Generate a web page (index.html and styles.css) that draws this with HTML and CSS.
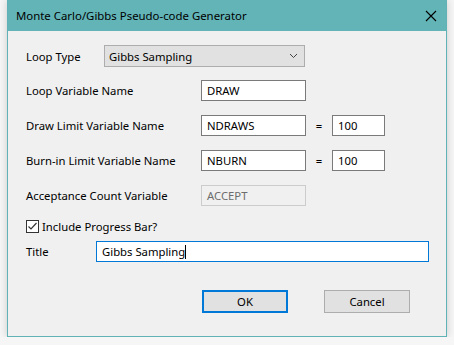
FILE: index.html
```html
<!DOCTYPE html>
<html lang="en">
<head>
  <meta charset="UTF-8">
  <title>Monte Carlo/Gibbs Pseudo-code Generator</title>
  <link rel="stylesheet" href="styles.css">
</head>
<body>

  <div class="dialog">
    <div class="titlebar">
      <span class="title">Monte Carlo/Gibbs Pseudo-code Generator</span>
      <svg class="close" width="12" height="12" viewBox="0 0 12 12">
        <path d="M1 1 L11 11 M11 1 L1 11" stroke="#000" stroke-width="1.1" fill="none"/>
      </svg>
    </div>

    <div class="client">
      <div class="row row-combo">
        <label class="lbl lbl-short">Loop Type</label>
        <div class="combo">
          <span>Gibbs Sampling</span>
          <svg class="chev" width="9" height="6" viewBox="0 0 9 6">
            <path d="M1 1 L4.5 4.5 L8 1" stroke="#444" stroke-width="1" fill="none"/>
          </svg>
        </div>
      </div>

      <div class="row">
        <label class="lbl">Loop Variable Name</label>
        <div class="box">DRAW</div>
      </div>

      <div class="row">
        <label class="lbl">Draw Limit Variable Name</label>
        <div class="box">NDRAWS</div>
        <span class="eq">=</span>
        <div class="box box-num">100</div>
      </div>

      <div class="row">
        <label class="lbl">Burn-in Limit Variable Name</label>
        <div class="box">NBURN</div>
        <span class="eq">=</span>
        <div class="box box-num">100</div>
      </div>

      <div class="row">
        <label class="lbl">Acceptance Count Variable</label>
        <div class="box box-disabled">ACCEPT</div>
      </div>

      <div class="row row-check">
        <span class="check">
          <svg width="11" height="11" viewBox="0 0 11 11">
            <path d="M1.5 5.5 L4 8 L9.5 2" stroke="#333" stroke-width="1.2" fill="none"/>
          </svg>
        </span>
        <label class="check-lbl">Include Progress Bar?</label>
      </div>

      <div class="row row-title">
        <label class="lbl lbl-title">Title</label>
        <div class="box box-focus">Gibbs Sampling<span class="caret"></span></div>
      </div>

      <div class="buttons">
        <button class="btn btn-default">OK</button>
        <button class="btn">Cancel</button>
      </div>
    </div>
  </div>

</body>
</html>
```

FILE: styles.css
```css
body {
  margin: 0;
  background: #f6f6f6;
  font-family: "Noto Sans", "Liberation Sans", sans-serif;
  font-size: 11.3px;
  color: #000;
}
.dialog {
  margin-left: 7px;
  width: 438px;
  height: 336px;
  border: 1px solid #5fb2b5;
  border-top: none;
  background: #f0f0f0;
  box-shadow: 0 0 8px rgba(0,0,0,0.18);
}
.titlebar {
  height: 31px;
  background: #62b4b7;
  display: flex;
  align-items: center;
  justify-content: space-between;
  padding: 0 9px 0 8px;
}
.title {
  font-size: 11.4px;
}
.close {
  display: block;
}
.client {
  padding: 14px 0 0 18px;
}
.row {
  display: flex;
  align-items: center;
  height: 21px;
  margin-bottom: 14px;
}
.row-combo {
  height: 22px;
  margin-bottom: 13px;
}
.lbl {
  width: 175px;
  flex: none;
}
.lbl-short {
  width: 78px;
}
.lbl-title {
  width: 70px;
}
.combo,
.box {
  box-sizing: border-box;
}
.combo {
  width: 201px;
  height: 22px;
  border: 1px solid #adadad;
  background: #e1e1e1;
  display: flex;
  align-items: center;
  justify-content: space-between;
  padding: 0 6px 0 4px;
}
.chev {
  display: block;
}
.box {
  width: 105px;
  height: 21px;
  border: 1px solid #7a7a7a;
  background: #fff;
  padding: 0 5px;
  display: flex;
  align-items: center;
}
.box-num {
  width: 53px;
}
.eq {
  width: 26px;
  text-align: center;
}
.box-disabled {
  border-color: #cccccc;
  background: #f0f0f0;
  color: #6d6d6d;
}
.row-check {
  height: 13px;
  margin-top: 5px;
  margin-bottom: 8px;
}
.check {
  width: 13px;
  height: 13px;
  box-sizing: border-box;
  border: 1px solid #333;
  background: #fff;
  display: flex;
  align-items: center;
  justify-content: center;
}
.check svg {
  display: block;
}
.check-lbl {
  margin-left: 3px;
}
.row-title {
  margin-bottom: 28px;
}
.box-focus {
  width: 333px;
  border-color: #0078d7;
}
.caret {
  display: inline-block;
  width: 1px;
  height: 14px;
  background: #000;
}
.buttons {
  display: flex;
  padding-left: 176px;
  gap: 36px;
}
.btn {
  width: 86px;
  height: 23px;
  margin: 0;
  font: inherit;
  color: #000;
  background: #e1e1e1;
  border: 1px solid #adadad;
  padding: 0;
}
.btn-default {
  border: 2px solid #0078d7;
}
```
